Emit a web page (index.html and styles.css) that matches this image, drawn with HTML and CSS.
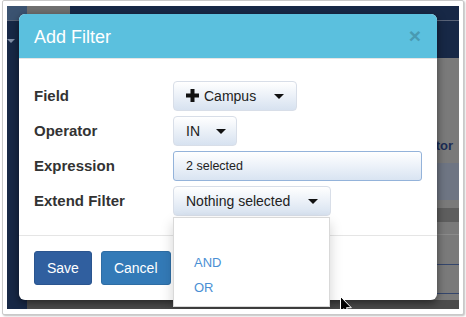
FILE: index.html
```
<!DOCTYPE html>
<html>
<head>
<meta charset="utf-8">
<link rel="stylesheet" href="styles.css">
</head>
<body>
<div class="frame">
  <div class="screen">
    <div class="bg-topleft"></div>
    <div class="bg-topgray"></div>
    <div class="bg-navline"></div>
    <div class="bg-caret"></div>
    <div class="bg-right">
      <div class="bg-r-gray1"><span class="bg-label">Operator</span></div>
      <div class="bg-r-blue"></div>
      <div class="bg-r-gap"></div>
      <div class="bg-r-dark"></div>
      <div class="bg-r-row"></div>
      <div class="bg-r-row bg-r-row2"></div>
      <div class="bg-r-row bg-r-row3"></div>
    </div>
    <div class="bg-bottom"></div>

    <div class="modal">
      <div class="modal-header">
        <h4 class="modal-title">Add Filter</h4>
        <span class="close">×</span>
      </div>
      <div class="modal-body">
        <div class="form-grid">
          <label class="lbl">Field</label>
          <div class="ctl">
            <button class="sel-btn">
              <svg class="plus" width="13" height="13" viewBox="0 0 13 13"><rect x="4.5" y="0" width="4" height="13" fill="#111"/><rect x="0" y="4.5" width="13" height="4" fill="#111"/></svg>
              <span class="sel-text">Campus</span><span class="caret"></span>
            </button>
          </div>
          <label class="lbl">Operator</label>
          <div class="ctl"><button class="sel-btn sel-small"><span class="sel-text">IN</span><span class="caret"></span></button></div>
          <label class="lbl">Expression</label>
          <div class="ctl"><div class="multi">2 selected</div></div>
          <label class="lbl">Extend Filter</label>
          <div class="ctl dd-wrap">
            <button class="sel-btn"><span class="sel-text">Nothing selected</span><span class="caret"></span></button>
            <ul class="dd-menu">
              <li class="dd-item dd-empty">&nbsp;</li>
              <li class="dd-item">AND</li>
              <li class="dd-item">OR</li>
            </ul>
          </div>
        </div>
      </div>
      <div class="modal-footer">
        <button class="btn btn-save">Save</button>
        <button class="btn btn-cancel">Cancel</button>
      </div>
    </div>

    <svg class="cursor" width="13" height="19" viewBox="0 0 13 19"><path d="M0.5 0.5 L0.5 16 L4 12.7 L6.6 18.3 L9 17.2 L6.5 11.7 L11.3 11.7 Z" fill="#000" stroke="#fff" stroke-width="1"/></svg>
  </div>
</div>
</body>
</html>
```
FILE: styles.css
```
* { box-sizing: border-box; }
html, body { margin: 0; padding: 0; }
body {
  width: 466px;
  height: 317px;
  background: #fff;
  font-family: "Liberation Sans", Arial, sans-serif;
  overflow: hidden;
}
.frame {
  margin: 0 0 0 2px;
  width: 462px;
  height: 315px;
  border: 1px solid #c9c9c9;
  border-radius: 2px;
  padding: 5px 4px 5px 4px;
  box-shadow: 1px 1px 2px rgba(0,0,0,0.25);
  background: #fff;
}
.screen {
  position: relative;
  width: 452px;
  height: 303px;
  background: #172846;
  overflow: hidden;
}
.bg-topleft { position: absolute; left: 0; top: 0; width: 20px; height: 14px; background: #3b5371; }
.bg-topgray { position: absolute; left: 20px; top: 0; width: 43px; height: 14px; background: #6f6f6f; }
.bg-navline { position: absolute; left: 0; top: 14px; width: 452px; height: 1px; background: #5a6478; }
.bg-caret {
  position: absolute; left: 0; top: 33px;
  border-left: 4px solid transparent; border-right: 4px solid transparent;
  border-top: 4px solid #8290a8;
}
.bg-right {
  position: absolute; left: 425px; top: 52px; width: 27px; height: 251px;
  background: #7a7a7a;
  display: flex; flex-direction: column;
}
.bg-r-gray1 { height: 105px; position: relative; }
.bg-label {
  position: absolute; right: 6px; top: 80px;
  font-weight: bold; font-size: 13px; color: #1a2c55;
}
.bg-r-blue { height: 37px; background: #6e7583; }
.bg-r-gap { height: 8px; }
.bg-r-dark { height: 14px; background: #5e5e5e; }
.bg-r-row { height: 13px; border-bottom: 1px solid #8a8a8a; }
.bg-r-row2 { height: 30px; border-bottom: 1px solid #34466c; }
.bg-r-row3 { height: 29px; border-bottom: 1px solid #34466c; }
.bg-bottom {
  position: absolute; left: 20px; top: 294px; width: 432px; height: 9px;
  background: #4c4c4c;
}

.modal {
  position: absolute;
  left: 12px; top: 8px;
  width: 418px;
  height: 286px;
  background: #fff;
  border-radius: 6px;
  box-shadow: 0 3px 9px rgba(0,0,0,0.5);
  display: flex; flex-direction: column;
}
.modal-header {
  height: 45px;
  background: #5bc0de;
  border-radius: 6px 6px 0 0;
  border-bottom: 1px solid #e5e5e5;
  padding: 0 15px;
  display: flex; align-items: center; justify-content: space-between;
}
.modal-title {
  margin: 0;
  font-size: 18px;
  font-weight: normal;
  color: #fff;
  line-height: 1;
  padding-top: 1px;
}
.close {
  font-size: 21px;
  font-weight: bold;
  line-height: 1;
  color: #499ab2;
  margin-right: 1px;
  margin-top: -1px;
}
.modal-body {
  padding: 22px 15px 19px 15px;
  border-bottom: 1px solid #e5e5e5;
}
.form-grid {
  display: grid;
  grid-template-columns: 139px 1fr;
  row-gap: 5px;
  align-items: center;
}
.lbl {
  font-size: 15px;
  font-weight: bold;
  color: #333;
  margin-top: -2px;
}
.ctl { display: flex; height: 30px; align-items: stretch; }
.sel-btn {
  display: inline-flex; align-items: center;
  height: 30px;
  padding: 0 12px;
  border: 1px solid #d8dee8;
  border-radius: 4px;
  background: linear-gradient(#ffffff, #d7e2f0);
  font-family: "Liberation Sans", Arial, sans-serif;
  font-size: 14px;
  color: #222;
}
.sel-small { padding-right: 10px; }
.sel-small .caret { margin-left: 16px; }
.plus { margin-right: 5px; margin-top: -1px; }
.sel-text { line-height: 1; }
.caret {
  margin-left: 18px;
  width: 0; height: 0;
  border-left: 5px solid transparent;
  border-right: 5px solid transparent;
  border-top: 5px solid #111;
}
.multi {
  width: 249px;
  height: 30px;
  border: 1px solid #94b3da;
  border-radius: 3px;
  background: linear-gradient(#ffffff, #d9e4f2);
  font-size: 12.5px;
  color: #222;
  padding: 0 12px;
  display: flex; align-items: center;
}
.dd-wrap { position: relative; }
.dd-menu {
  position: absolute;
  left: 0; top: 31px;
  width: 157px;
  margin: 0;
  padding: 7px 0 6px 0;
  list-style: none;
  background: #fff;
  border: 1px solid rgba(0,0,0,0.15);
  box-shadow: 0 6px 12px rgba(0,0,0,0.18);
  z-index: 5;
}
.dd-item {
  height: 25px;
  line-height: 25px;
  padding-left: 20px;
  font-size: 13px;
  color: #4a8fd4;
}
.modal-footer {
  padding: 15px;
  display: flex; gap: 9px;
}
.btn {
  height: 34px;
  padding: 0 12px;
  border: 1px solid transparent;
  border-radius: 3px;
  font-family: "Liberation Sans", Arial, sans-serif;
  font-size: 14px;
  color: #fff;
}
.btn-save { background: #305f9f; border-color: #2b558f; }
.btn-cancel { background: #337ab7; border-color: #2e6da4; }
.cursor { position: absolute; left: 333px; top: 290px; z-index: 10; }
```
